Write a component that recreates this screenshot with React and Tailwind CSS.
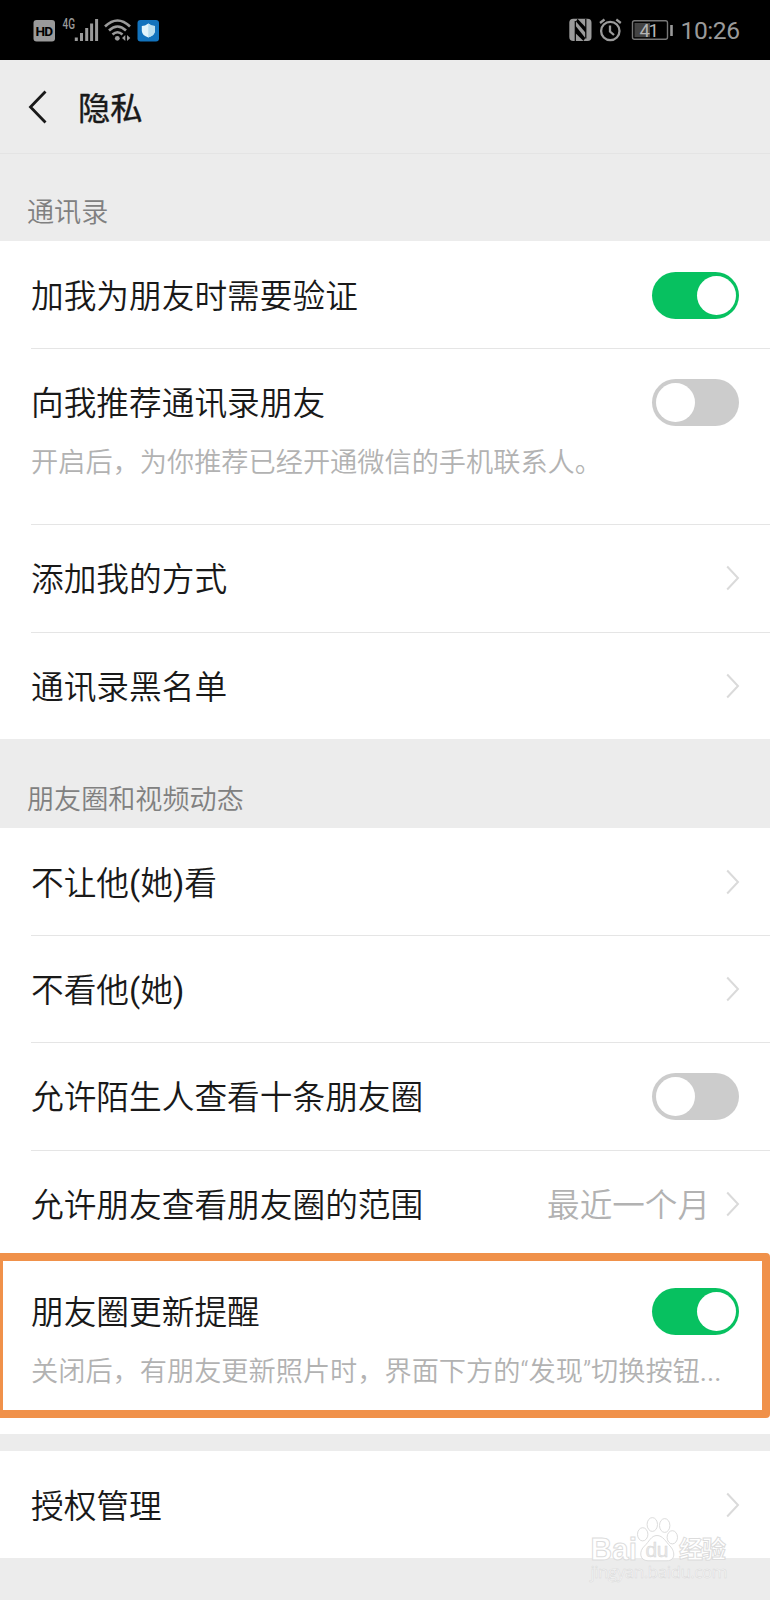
import { useState } from 'react';

const Chevron = () => (
    <svg width="14" height="26" viewBox="0 0 14 26" fill="none" className="shrink-0">
        <path d="M1.2 1.5 L12 13 L1.2 24.5" stroke="#dadada" strokeWidth="2" />
    </svg>
);

const Toggle = ({ initial }) => {
    const [on, setOn] = useState(initial);

    return (
        <button
            type="button"
            role="switch"
            aria-checked={on}
            onClick={() => setOn(!on)}
            className={`mr-px flex h-[47px] w-[87px] shrink-0 items-center rounded-full px-[3.5px] ${
                on ? 'justify-end bg-[#07c160]' : 'justify-start bg-[#cccccc]'
            }`}
        >
            <span className="size-[39px] rounded-full bg-white" />
        </button>
    );
};

// Latin punctuation is a little heavier than the Chinese text around it
const MixedText = ({ text }) =>
    text.split(/([()]|\.{3})/).map((part, i) => (
        <span key={i} className={i % 2 ? 'font-normal' : ''}>
            {part}
        </span>
    ));

const Row = ({ label, value, desc, toggle, first, height = 'h-[107px]' }) => (
    <div className={`pl-[31px] ${height}`}>
        <div className={`h-full border-t ${first ? 'border-transparent' : 'border-[#e5e5e5]'}`}>
            <div className="flex h-[106px] items-center pr-[30px]">
                <span className="flex-1 pt-[5px] text-[32.7px] leading-none text-[#191919]">
                    <MixedText text={label} />
                </span>
                {value && <span className="mr-4 pt-[5px] text-[32.6px] leading-none text-[#b2b2b2]">{value}</span>}
                {toggle !== undefined ? <Toggle initial={toggle} /> : <Chevron />}
            </div>
            {desc && (
                <p className="-mt-[12px] whitespace-nowrap text-[27.2px] leading-[40px] text-[#b2b2b2]">
                    <MixedText text={desc} />
                </p>
            )}
        </div>
    </div>
);

const SectionTitle = ({ children, className }) => (
    <h2 className={`flex items-end bg-[#ececec] pb-[8px] pl-[27px] text-[27.1px] leading-[40px] text-[#808080] ${className}`}>
        {children}
    </h2>
);

const StatusBar = () => (
    <div className="flex h-[60px] items-center justify-between bg-black font-normal text-[#9a9a9a]">
        <svg width="180" height="60" viewBox="0 0 180 60" fill="none">
            <rect x="33.5" y="20" width="21.5" height="21.5" rx="3" fill="#9a9a9a" />
            <text x="35.5" y="35.8" fontSize="13.6" fontWeight="700" textLength="17.5" fill="#000" fontFamily="Roboto, sans-serif">HD</text>
            <text x="62.5" y="29.3" fontSize="14" fontWeight="500" textLength="12.5" lengthAdjust="spacingAndGlyphs" fill="#9a9a9a" fontFamily="Roboto, sans-serif">4G</text>
            <path d="M76.3 37.5V41M81.5 33V41M86.7 28V41M91.6 23.5V41M96.6 19V41" stroke="#9a9a9a" strokeWidth="3" />
            <path d="M105 26.5Q117.5 14.5 130 26.5M109 30.5Q117.5 22.5 126 30.5M112.5 34.5Q117.5 30 122.5 34.5" stroke="#9a9a9a" strokeWidth="2.6" />
            <circle cx="117.3" cy="38.3" r="2.4" fill="#9a9a9a" />
            <path d="M125.3 35V41L122 38ZM127 35V41L130.3 38Z" fill="#9a9a9a" />
            <rect x="137.5" y="20" width="21.5" height="21.5" rx="3" fill="#1273bd" />
            <path d="M148.3 23.5Q151.5 26 155 26V31Q154.5 35.5 148.3 37.5Q142.2 35.5 141.8 31V26Q145 26 148.3 23.5Z" fill="#e3f5fb" />
            <path d="M148.3 23.5Q151.5 26 155 26V31Q154.5 35.5 148.3 37.5Z" fill="#b9dff0" />
        </svg>
        <svg width="210" height="60" viewBox="560 0 210 60" fill="none">
            <rect x="569.3" y="18.8" width="22.2" height="22.2" rx="4" fill="#9a9a9a" />
            {/* NFC mark */}
            <path d="M575.3 41V21M585.8 38.5V19" stroke="#000" strokeWidth="1.2" />
            <path d="M577.5 18.8L585.8 27.5V33L576 21.5Z" fill="#000" />
            <path d="M575.3 25.5L585.3 38L583.5 41L575.3 33Z" fill="#000" />
            <circle cx="610.3" cy="31" r="9.2" stroke="#9a9a9a" strokeWidth="2.3" />
            <path d="M610 25.5V31.5L614 35M600 23L604.5 19.5M616.3 19.5L620.8 23" stroke="#9a9a9a" strokeWidth="2.3" />
            <rect x="632.5" y="20.8" width="35" height="18.5" rx="2" stroke="#777" strokeWidth="1.4" />
            <rect x="634.5" y="23" width="15.5" height="14.2" fill="#444" />
            <path d="M671.5 25V36" stroke="#9a9a9a" strokeWidth="2.6" />
            <text x="639.5" y="36.7" fontSize="18.6" textLength="19.5" fill="#b4b4b4" fontFamily="Roboto, sans-serif">41</text>
            <text x="680.5" y="39.3" fontSize="24.6" textLength="59.5" fill="#9a9a9a" fontFamily="Roboto, sans-serif">10:26</text>
        </svg>
    </div>
);

const Watermark = () => (
    <svg
        width="150"
        height="80"
        viewBox="585 1510 150 80"
        className="pointer-events-none absolute right-[35px] bottom-[10px]"
        fill="#fff"
        stroke="#dcdcdc"
        strokeWidth="1"
    >
        <ellipse cx="642.7" cy="1534.3" rx="5.2" ry="6.6" />
        <ellipse cx="652.3" cy="1524.5" rx="5.2" ry="6.9" />
        <ellipse cx="664.7" cy="1525.5" rx="5.2" ry="6.9" />
        <ellipse cx="672.3" cy="1537.3" rx="5.2" ry="6.6" />
        <path d="M657 1535.5C663 1535.5 666 1542 670 1546C675 1551 676 1560.5 667 1560.8H648C639 1560.5 639 1551 644.5 1546C649 1542 651 1535.5 657 1535.5Z" />
        <text x="590.5" y="1560" fontSize="31.5" fontWeight="700" textLength="46.5" lengthAdjust="spacingAndGlyphs" fontFamily="Liberation Sans, sans-serif">Bai</text>
        <text x="645.5" y="1557" fontSize="21" fontWeight="400" textLength="23" fontFamily="Liberation Sans, sans-serif" strokeWidth="0.4" fill="#e8e8e8" stroke="#d4d4d4">du</text>
        <text x="679" y="1558" fontSize="24" fontWeight="700" textLength="47" fontFamily="Noto Sans CJK SC, sans-serif">经验</text>
        <text x="590.5" y="1578" fontSize="17" fontWeight="400" textLength="137" fontFamily="Open Sans, sans-serif" fill="#fafafa" stroke="#d8d8d8" strokeWidth="0.5">jingyan.baidu.com</text>
    </svg>
);

const App = () => (
    <div
        lang="zh-CN"
        className="relative h-[1600px] w-[770px] overflow-hidden bg-[#ececec] font-[Roboto,'Noto_Sans_CJK_SC',sans-serif] font-[350]"
    >
        <StatusBar />
        <header className="flex h-[94px] items-center border-b border-[#e4e4e4] pl-[28px]">
            <svg width="20" height="34" viewBox="0 0 20 34" fill="none">
                <path d="M17.5 1.5L2.5 17L17.5 32.5" stroke="#191919" strokeWidth="2.8" />
            </svg>
            <h1 className="ml-[30px] pt-[5px] text-[32.3px] leading-none font-normal text-[#191919] [-webkit-text-stroke:0.4px_#191919]">
                隐私
            </h1>
        </header>

        <SectionTitle className="h-[87px]">通讯录</SectionTitle>
        <section className="bg-white">
            <Row label="加我为朋友时需要验证" toggle={true} first height="h-[107px]" />
            <Row
                label="向我推荐通讯录朋友"
                toggle={false}
                desc="开启后，为你推荐已经开通微信的手机联系人。"
                height="h-[176px]"
            />
            <Row label="添加我的方式" height="h-[108px]" />
            <Row label="通讯录黑名单" />
        </section>

        <SectionTitle className="h-[89px]">朋友圈和视频动态</SectionTitle>
        <section className="bg-white">
            <Row label="不让他(她)看" first />
            <Row label="不看他(她)" />
            <Row label="允许陌生人查看十条朋友圈" toggle={false} height="h-[108px]" />
            <Row label="允许朋友查看朋友圈的范围" value="最近一个月" />
            <div className="relative">
                <Row
                    label="朋友圈更新提醒"
                    toggle={true}
                    desc="关闭后，有朋友更新照片时，界面下方的“发现”切换按钮..."
                    height="h-[177px]"
                />
                <div className="pointer-events-none absolute -top-[4px] -left-[5px] h-[165px] w-[775px] rounded-[4px] border-8 border-[#f0914a]" />
            </div>
        </section>

        <section className="mt-[17px] bg-white">
            <Row label="授权管理" first />
        </section>
        <Watermark />
    </div>
);

export default App;
